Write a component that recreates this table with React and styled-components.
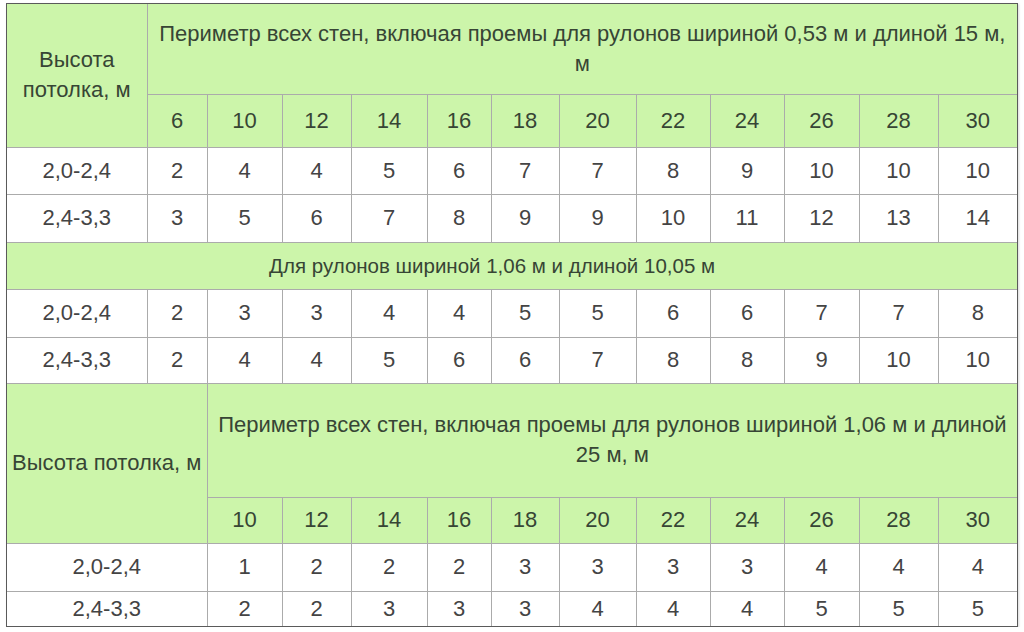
import React from "react";
import styled, { createGlobalStyle } from "styled-components";

const GlobalStyle = createGlobalStyle`
  html, body {
    margin: 0;
    padding: 0;
    background: #ffffff;
  }
  body {
    font-family: "Liberation Sans", Arial, sans-serif;
  }
`;

const Page = styled.div`
  padding: 3px 6px 0 6px;
  width: 1024px;
  box-sizing: border-box;
`;

const Frame = styled.div`
  width: 1012px;
  box-sizing: border-box;
  border: 1px solid #5a5a5a;
  box-shadow: 1px 1px 2px rgba(0, 0, 0, 0.15);
`;

const Table = styled.table`
  width: 1010px;
  table-layout: fixed;
  border-collapse: collapse;
  border-style: hidden;
  font-size: 22px;
`;

const Row = styled.tr`
  height: ${({ $h }) => $h}px;
`;

const Cell = styled.td`
  border: 1px solid #ababab;
  padding: 0 ${({ $padR }) => ($padR ? `${$padR}px` : "4px")} 0 4px;
  text-align: center;
  vertical-align: middle;
  line-height: 30px;
  font-size: ${({ $small }) => ($small ? "20.5px" : "22px")};
  color: ${({ $head }) => ($head ? "#374535" : "#444444")};
  background: ${({ $head }) => ($head ? "#ccf5aa" : "#ffffff")};
`;

const colWidths = [140, 60, 75, 69, 76, 64, 68, 77, 74, 74, 75, 79, 79];

const sizesA = [6, 10, 12, 14, 16, 18, 20, 22, 24, 26, 28, 30];
const sizesB = [10, 12, 14, 16, 18, 20, 22, 24, 26, 28, 30];

const rowsA = [
  ["2,0-2,4", [2, 4, 4, 5, 6, 7, 7, 8, 9, 10, 10, 10]],
  ["2,4-3,3", [3, 5, 6, 7, 8, 9, 9, 10, 11, 12, 13, 14]],
];

const rowsMid = [
  ["2,0-2,4", [2, 3, 3, 4, 4, 5, 5, 6, 6, 7, 7, 8]],
  ["2,4-3,3", [2, 4, 4, 5, 6, 6, 7, 8, 8, 9, 10, 10]],
];

const rowsB = [
  ["2,0-2,4", [1, 2, 2, 2, 3, 3, 3, 3, 4, 4, 4]],
  ["2,4-3,3", [2, 2, 3, 3, 3, 4, 4, 4, 5, 5, 5]],
];

const DataRow = ({ h, label, values, wideLabel }) => (
  <Row $h={h}>
    <Cell colSpan={wideLabel ? 2 : 1}>{label}</Cell>
    {values.map((v, i) => (
      <Cell key={i}>{v}</Cell>
    ))}
  </Row>
);

const App = () => {
  return (
    <Page>
      <GlobalStyle />
      <Frame>
        <Table>
          <colgroup>
            {colWidths.map((w, i) => (
              <col key={i} style={{ width: w }} />
            ))}
          </colgroup>
          <tbody>
            <Row $h={90}>
              <Cell $head rowSpan={2}>
                Высота потолка, м
              </Cell>
              <Cell $head colSpan={12}>
                Периметр всех стен, включая проемы для рулонов шириной 0,53 м и длиной 15 м,
                <br />м
              </Cell>
            </Row>
            <Row $h={53}>
              {sizesA.map((s) => (
                <Cell $head key={s}>{s}</Cell>
              ))}
            </Row>
            <DataRow h={47} label={rowsA[0][0]} values={rowsA[0][1]} />
            <DataRow h={48} label={rowsA[1][0]} values={rowsA[1][1]} />

            <Row $h={47}>
              <Cell $head $small colSpan={13} $padR={44}>
                Для рулонов шириной 1,06 м и длиной 10,05 м
              </Cell>
            </Row>
            <DataRow h={48} label={rowsMid[0][0]} values={rowsMid[0][1]} />
            <DataRow h={46} label={rowsMid[1][0]} values={rowsMid[1][1]} />

            <Row $h={114}>
              <Cell $head colSpan={2} rowSpan={2}>
                Высота потолка, м
              </Cell>
              <Cell $head colSpan={11}>
                Периметр всех стен, включая проемы для рулонов шириной 1,06 м и длиной
                <br />
                25 м, м
              </Cell>
            </Row>
            <Row $h={46}>
              {sizesB.map((s) => (
                <Cell $head key={s}>{s}</Cell>
              ))}
            </Row>
            <DataRow h={48} label={rowsB[0][0]} values={rowsB[0][1]} wideLabel />
            <DataRow h={35} label={rowsB[1][0]} values={rowsB[1][1]} wideLabel />
          </tbody>
        </Table>
      </Frame>
    </Page>
  );
};

export default App;
